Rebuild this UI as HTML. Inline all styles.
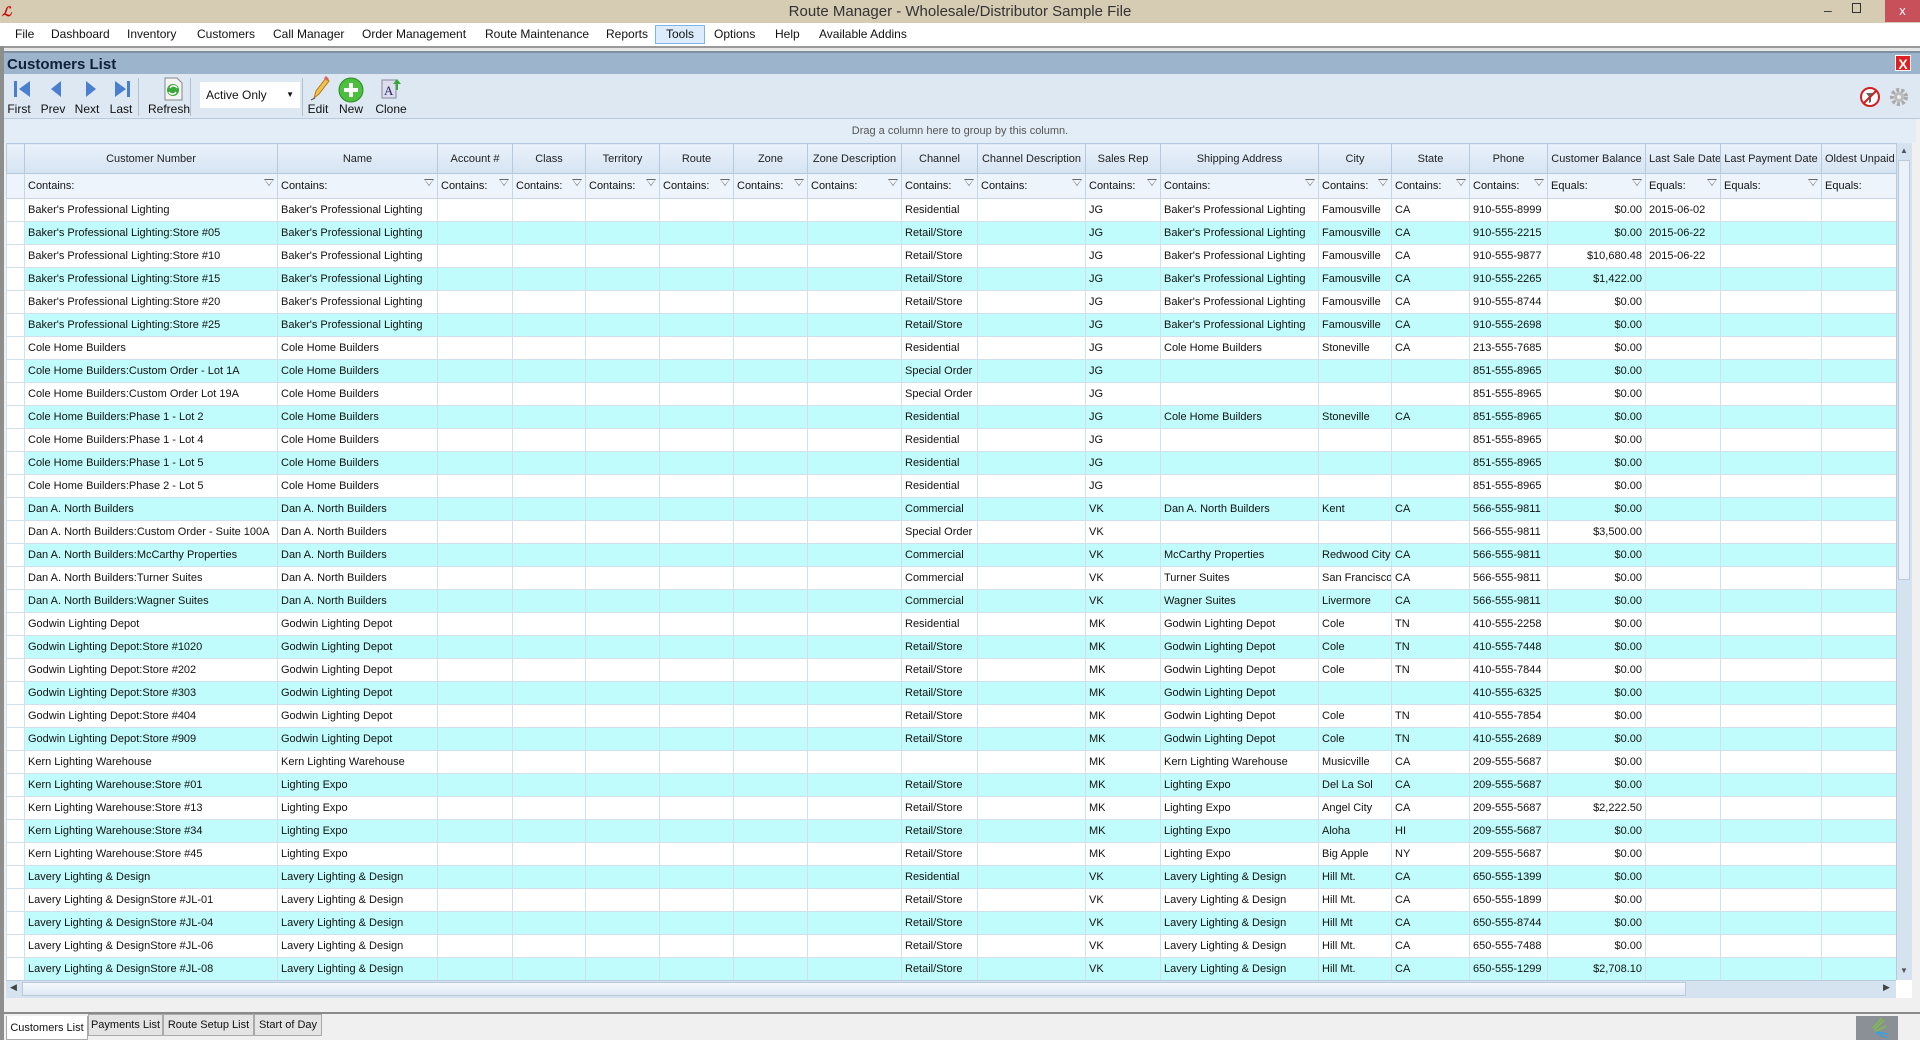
<!DOCTYPE html>
<html><head><meta charset="utf-8"><style>
*{box-sizing:border-box;margin:0;padding:0}
body{width:1920px;height:1040px;overflow:hidden;background:#f0f0f0;font-family:"Liberation Sans",sans-serif;position:relative;color:#111}
.abs{position:absolute}
#title{left:0;top:0;width:1920px;height:23px;background:#d6cbb3;text-align:center;font-size:15px;line-height:23px;color:#333}
#menu{left:0;top:23px;width:1920px;height:23px;background:#fff;font-size:12px;}
#menu span{position:absolute;top:4px}
#cl{left:4px;top:51px;width:1916px;height:23px;background:#9db5cc;font-weight:bold;font-size:15px;line-height:23px;padding-left:3px;color:#10203a;border-top:2px solid #7d8fa0}
#tb{left:4px;top:74px;width:1916px;height:45px;background:#dde8f3;border-bottom:1px solid #b9cadb}
.tl{position:absolute;top:33px;font-size:12px;transform:translateX(-50%);top:28px}
#grp{left:4px;top:119px;width:1912px;height:24px;background:#e3edf7;font-size:11px;color:#555;text-align:center;line-height:24px}
#grid{left:6px;top:143px;width:1890px}
table{border-collapse:collapse;table-layout:fixed;width:1890px;font-size:11px}
td,th{white-space:nowrap;overflow:hidden;padding:0 3px;border:1px solid #d3e0ec;font-weight:normal}
tr.h th{height:30px;background:linear-gradient(#eaf2fb,#d5e3f2);border-color:#b5c9de;text-align:center;color:#222}
tr.f td{height:25px;background:#eef4fb;border-color:#c5d6e7;position:relative}
tr.f td i{position:absolute;right:4px;top:5px;width:9px;height:10px;border:1px solid #555;border-width:0;}
tr.f td i:before{content:"";position:absolute;left:0;top:0;border-left:5px solid transparent;border-right:5px solid transparent;border-top:7px solid #666}
tr.f td i:after{content:"";position:absolute;left:1px;top:1px;border-left:4px solid transparent;border-right:4px solid transparent;border-top:5px solid #eef4fb}
tbody tr td{height:23px}
tbody tr:nth-child(even) td{background:#c0fcfc}
tbody tr:nth-child(odd) td{background:#fff}
td.r{text-align:right}
td.s{background:#fff!important}
</style></head><body>
<div id="title" class="abs">Route Manager - Wholesale/Distributor Sample File</div>
<div class="abs" style="left:2px;top:4px;color:#c00;font-weight:bold;font-style:italic;font-size:13px">ℒ</div>
<div class="abs" style="left:1824px;top:2px;font-size:14px;color:#333">‒</div>
<div class="abs" style="left:1852px;top:3px;width:9px;height:10px;border:1px solid #333"></div>
<div class="abs" style="left:1885px;top:0;width:35px;height:22px;background:#c7505a;color:#fff;text-align:center;font-size:13px;line-height:21px">x</div>
<div id="menu" class="abs">
<span style="left:15px">File</span><span style="left:51px">Dashboard</span><span style="left:127px">Inventory</span><span style="left:197px">Customers</span><span style="left:273px">Call Manager</span><span style="left:362px">Order Management</span><span style="left:485px">Route Maintenance</span><span style="left:606px">Reports</span>
<div class="abs" style="left:655px;top:2px;width:50px;height:19px;background:#dcecfc;border:1px solid #7eb4ea"></div><span style="left:666px">Tools</span>
<span style="left:714px">Options</span><span style="left:775px">Help</span><span style="left:819px">Available Addins</span>
</div>
<div class="abs" style="left:0;top:46px;width:1920px;height:5px;background:#e6e6e6;border-top:2px solid #9a9a9a"></div>
<div class="abs" style="left:0;top:46px;width:4px;height:994px;background:#8e8e8e"></div>
<div id="cl" class="abs">Customers List</div>
<div class="abs" style="left:1895px;top:55px;width:16px;height:16px;background:#e02020;color:#fff;font-weight:bold;font-size:14px;text-align:center;line-height:16px;border:1px solid #fff">X</div>
<div id="tb" class="abs">
<svg class="abs" style="left:6px;top:6px" width="130" height="18">
<rect x="4" y="1" width="3" height="16" fill="#4a7fd0"/><polygon points="20,1 9,9 20,17" fill="#4a7fd0"/>
<polygon points="51,1 41,9 51,17" fill="#4a7fd0"/>
<polygon points="76,1 86,9 76,17" fill="#4a7fd0"/>
<polygon points="105,1 116,9 105,17" fill="#4a7fd0"/><rect x="117" y="1" width="3" height="16" fill="#4a7fd0"/>
</svg>
<div class="abs" style="left:134px;top:4px;width:1px;height:38px;background:#b0c0d0"></div>
<svg class="abs" style="left:158px;top:3px" width="22" height="24"><path d="M3 1h12l5 5v17H3z" fill="#f4f4f4" stroke="#888"/><circle cx="11" cy="13" r="6" fill="#3aa838"/><path d="M8 11a4 4 0 0 1 7 0M14 15a4 4 0 0 1 -7 0" stroke="#fff" stroke-width="1.5" fill="none"/></svg>
<div class="abs" style="left:186px;top:4px;width:1px;height:38px;background:#b0c0d0"></div>
<div class="abs" style="left:196px;top:8px;width:100px;height:26px;background:#fff;font-size:12px;line-height:26px;padding-left:6px">Active Only<span style="position:absolute;right:6px;font-size:8px">▼</span></div>
<div class="abs" style="left:298px;top:4px;width:1px;height:38px;background:#b0c0d0"></div>
<svg class="abs" style="left:304px;top:2px" width="22" height="26"><path d="M6 22l2-7 10-13 3 3-10 13z" fill="#f3c24a" stroke="#b07a20"/><path d="M16 2l3 3 2-2-3-3z" fill="#e06060"/><path d="M3 24l4 -2" stroke="#555"/></svg>
<svg class="abs" style="left:334px;top:3px" width="26" height="26"><circle cx="13" cy="13" r="12" fill="#4cbf3e" stroke="#2c8a24"/><path d="M13 6v14M6 13h14" stroke="#fff" stroke-width="4"/></svg>
<svg class="abs" style="left:376px;top:3px" width="24" height="24"><rect x="2" y="3" width="14" height="18" fill="#dde" stroke="#889"/><text x="4" y="18" font-size="13" font-family="Liberation Serif" fill="#226">A</text><path d="M17 2l4 5h-3v6h-2V7h-3z" fill="#3a3"/></svg>
<span class="tl" style="left:15px">First</span><span class="tl" style="left:49px">Prev</span><span class="tl" style="left:83px">Next</span><span class="tl" style="left:117px">Last</span><span class="tl" style="left:165px">Refresh</span><span class="tl" style="left:314px">Edit</span><span class="tl" style="left:347px">New</span><span class="tl" style="left:387px">Clone</span>
<svg class="abs" style="left:1855px;top:12px" width="22" height="22"><circle cx="11" cy="11" r="9" fill="#fff" stroke="#d02020" stroke-width="2"/><path d="M7 7h8l-3 4v5l-2 1v-6z" fill="#666"/><path d="M5 17L17 5" stroke="#d02020" stroke-width="2"/></svg>
<svg class="abs" style="left:1884px;top:12px" width="22" height="22"><circle cx="11" cy="11" r="7" fill="none" stroke="#aaa" stroke-width="4" stroke-dasharray="3 2"/><circle cx="11" cy="11" r="5" fill="#bbb"/><circle cx="11" cy="11" r="2" fill="#eee"/></svg>
</div>
<div id="grp" class="abs">Drag a column here to group by this column.</div>
<div id="grid" class="abs">
<table>
<colgroup><col style="width:18px"><col style="width:253px"><col style="width:160px"><col style="width:75px"><col style="width:73px"><col style="width:74px"><col style="width:74px"><col style="width:74px"><col style="width:94px"><col style="width:76px"><col style="width:108px"><col style="width:75px"><col style="width:158px"><col style="width:73px"><col style="width:78px"><col style="width:78px"><col style="width:98px"><col style="width:75px"><col style="width:101px"><col style="width:75px"></colgroup>
<thead>
<tr class="h"><th></th><th>Customer Number</th><th>Name</th><th>Account #</th><th>Class</th><th>Territory</th><th>Route</th><th>Zone</th><th>Zone Description</th><th>Channel</th><th>Channel Description</th><th>Sales Rep</th><th>Shipping Address</th><th>City</th><th>State</th><th>Phone</th><th>Customer Balance</th><th>Last Sale Date</th><th>Last Payment Date</th><th style="text-align:left">Oldest Unpaid</th></tr>
<tr class="f"><td></td><td>Contains:<i></i></td><td>Contains:<i></i></td><td>Contains:<i></i></td><td>Contains:<i></i></td><td>Contains:<i></i></td><td>Contains:<i></i></td><td>Contains:<i></i></td><td>Contains:<i></i></td><td>Contains:<i></i></td><td>Contains:<i></i></td><td>Contains:<i></i></td><td>Contains:<i></i></td><td>Contains:<i></i></td><td>Contains:<i></i></td><td>Contains:<i></i></td><td>Equals:<i></i></td><td>Equals:<i></i></td><td>Equals:<i></i></td><td>Equals:</td></tr>
</thead>
<tbody>
<tr><td class="s"></td><td>Baker's Professional Lighting</td><td>Baker's Professional Lighting</td><td></td><td></td><td></td><td></td><td></td><td></td><td>Residential</td><td></td><td>JG</td><td>Baker's Professional Lighting</td><td>Famousville</td><td>CA</td><td>910-555-8999</td><td class="r">$0.00</td><td>2015-06-02</td><td></td><td></td></tr>
<tr><td class="s"></td><td>Baker's Professional Lighting:Store #05</td><td>Baker's Professional Lighting</td><td></td><td></td><td></td><td></td><td></td><td></td><td>Retail/Store</td><td></td><td>JG</td><td>Baker's Professional Lighting</td><td>Famousville</td><td>CA</td><td>910-555-2215</td><td class="r">$0.00</td><td>2015-06-22</td><td></td><td></td></tr>
<tr><td class="s"></td><td>Baker's Professional Lighting:Store #10</td><td>Baker's Professional Lighting</td><td></td><td></td><td></td><td></td><td></td><td></td><td>Retail/Store</td><td></td><td>JG</td><td>Baker's Professional Lighting</td><td>Famousville</td><td>CA</td><td>910-555-9877</td><td class="r">$10,680.48</td><td>2015-06-22</td><td></td><td></td></tr>
<tr><td class="s"></td><td>Baker's Professional Lighting:Store #15</td><td>Baker's Professional Lighting</td><td></td><td></td><td></td><td></td><td></td><td></td><td>Retail/Store</td><td></td><td>JG</td><td>Baker's Professional Lighting</td><td>Famousville</td><td>CA</td><td>910-555-2265</td><td class="r">$1,422.00</td><td></td><td></td><td></td></tr>
<tr><td class="s"></td><td>Baker's Professional Lighting:Store #20</td><td>Baker's Professional Lighting</td><td></td><td></td><td></td><td></td><td></td><td></td><td>Retail/Store</td><td></td><td>JG</td><td>Baker's Professional Lighting</td><td>Famousville</td><td>CA</td><td>910-555-8744</td><td class="r">$0.00</td><td></td><td></td><td></td></tr>
<tr><td class="s"></td><td>Baker's Professional Lighting:Store #25</td><td>Baker's Professional Lighting</td><td></td><td></td><td></td><td></td><td></td><td></td><td>Retail/Store</td><td></td><td>JG</td><td>Baker's Professional Lighting</td><td>Famousville</td><td>CA</td><td>910-555-2698</td><td class="r">$0.00</td><td></td><td></td><td></td></tr>
<tr><td class="s"></td><td>Cole Home Builders</td><td>Cole Home Builders</td><td></td><td></td><td></td><td></td><td></td><td></td><td>Residential</td><td></td><td>JG</td><td>Cole Home Builders</td><td>Stoneville</td><td>CA</td><td>213-555-7685</td><td class="r">$0.00</td><td></td><td></td><td></td></tr>
<tr><td class="s"></td><td>Cole Home Builders:Custom Order - Lot 1A</td><td>Cole Home Builders</td><td></td><td></td><td></td><td></td><td></td><td></td><td>Special Order</td><td></td><td>JG</td><td></td><td></td><td></td><td>851-555-8965</td><td class="r">$0.00</td><td></td><td></td><td></td></tr>
<tr><td class="s"></td><td>Cole Home Builders:Custom Order Lot 19A</td><td>Cole Home Builders</td><td></td><td></td><td></td><td></td><td></td><td></td><td>Special Order</td><td></td><td>JG</td><td></td><td></td><td></td><td>851-555-8965</td><td class="r">$0.00</td><td></td><td></td><td></td></tr>
<tr><td class="s"></td><td>Cole Home Builders:Phase 1 - Lot 2</td><td>Cole Home Builders</td><td></td><td></td><td></td><td></td><td></td><td></td><td>Residential</td><td></td><td>JG</td><td>Cole Home Builders</td><td>Stoneville</td><td>CA</td><td>851-555-8965</td><td class="r">$0.00</td><td></td><td></td><td></td></tr>
<tr><td class="s"></td><td>Cole Home Builders:Phase 1 - Lot 4</td><td>Cole Home Builders</td><td></td><td></td><td></td><td></td><td></td><td></td><td>Residential</td><td></td><td>JG</td><td></td><td></td><td></td><td>851-555-8965</td><td class="r">$0.00</td><td></td><td></td><td></td></tr>
<tr><td class="s"></td><td>Cole Home Builders:Phase 1 - Lot 5</td><td>Cole Home Builders</td><td></td><td></td><td></td><td></td><td></td><td></td><td>Residential</td><td></td><td>JG</td><td></td><td></td><td></td><td>851-555-8965</td><td class="r">$0.00</td><td></td><td></td><td></td></tr>
<tr><td class="s"></td><td>Cole Home Builders:Phase 2 - Lot 5</td><td>Cole Home Builders</td><td></td><td></td><td></td><td></td><td></td><td></td><td>Residential</td><td></td><td>JG</td><td></td><td></td><td></td><td>851-555-8965</td><td class="r">$0.00</td><td></td><td></td><td></td></tr>
<tr><td class="s"></td><td>Dan A. North Builders</td><td>Dan A. North Builders</td><td></td><td></td><td></td><td></td><td></td><td></td><td>Commercial</td><td></td><td>VK</td><td>Dan A. North Builders</td><td>Kent</td><td>CA</td><td>566-555-9811</td><td class="r">$0.00</td><td></td><td></td><td></td></tr>
<tr><td class="s"></td><td>Dan A. North Builders:Custom Order - Suite 100A</td><td>Dan A. North Builders</td><td></td><td></td><td></td><td></td><td></td><td></td><td>Special Order</td><td></td><td>VK</td><td></td><td></td><td></td><td>566-555-9811</td><td class="r">$3,500.00</td><td></td><td></td><td></td></tr>
<tr><td class="s"></td><td>Dan A. North Builders:McCarthy Properties</td><td>Dan A. North Builders</td><td></td><td></td><td></td><td></td><td></td><td></td><td>Commercial</td><td></td><td>VK</td><td>McCarthy Properties</td><td>Redwood City</td><td>CA</td><td>566-555-9811</td><td class="r">$0.00</td><td></td><td></td><td></td></tr>
<tr><td class="s"></td><td>Dan A. North Builders:Turner Suites</td><td>Dan A. North Builders</td><td></td><td></td><td></td><td></td><td></td><td></td><td>Commercial</td><td></td><td>VK</td><td>Turner Suites</td><td>San Francisco</td><td>CA</td><td>566-555-9811</td><td class="r">$0.00</td><td></td><td></td><td></td></tr>
<tr><td class="s"></td><td>Dan A. North Builders:Wagner Suites</td><td>Dan A. North Builders</td><td></td><td></td><td></td><td></td><td></td><td></td><td>Commercial</td><td></td><td>VK</td><td>Wagner Suites</td><td>Livermore</td><td>CA</td><td>566-555-9811</td><td class="r">$0.00</td><td></td><td></td><td></td></tr>
<tr><td class="s"></td><td>Godwin Lighting Depot</td><td>Godwin Lighting Depot</td><td></td><td></td><td></td><td></td><td></td><td></td><td>Residential</td><td></td><td>MK</td><td>Godwin Lighting Depot</td><td>Cole</td><td>TN</td><td>410-555-2258</td><td class="r">$0.00</td><td></td><td></td><td></td></tr>
<tr><td class="s"></td><td>Godwin Lighting Depot:Store #1020</td><td>Godwin Lighting Depot</td><td></td><td></td><td></td><td></td><td></td><td></td><td>Retail/Store</td><td></td><td>MK</td><td>Godwin Lighting Depot</td><td>Cole</td><td>TN</td><td>410-555-7448</td><td class="r">$0.00</td><td></td><td></td><td></td></tr>
<tr><td class="s"></td><td>Godwin Lighting Depot:Store #202</td><td>Godwin Lighting Depot</td><td></td><td></td><td></td><td></td><td></td><td></td><td>Retail/Store</td><td></td><td>MK</td><td>Godwin Lighting Depot</td><td>Cole</td><td>TN</td><td>410-555-7844</td><td class="r">$0.00</td><td></td><td></td><td></td></tr>
<tr><td class="s"></td><td>Godwin Lighting Depot:Store #303</td><td>Godwin Lighting Depot</td><td></td><td></td><td></td><td></td><td></td><td></td><td>Retail/Store</td><td></td><td>MK</td><td>Godwin Lighting Depot</td><td></td><td></td><td>410-555-6325</td><td class="r">$0.00</td><td></td><td></td><td></td></tr>
<tr><td class="s"></td><td>Godwin Lighting Depot:Store #404</td><td>Godwin Lighting Depot</td><td></td><td></td><td></td><td></td><td></td><td></td><td>Retail/Store</td><td></td><td>MK</td><td>Godwin Lighting Depot</td><td>Cole</td><td>TN</td><td>410-555-7854</td><td class="r">$0.00</td><td></td><td></td><td></td></tr>
<tr><td class="s"></td><td>Godwin Lighting Depot:Store #909</td><td>Godwin Lighting Depot</td><td></td><td></td><td></td><td></td><td></td><td></td><td>Retail/Store</td><td></td><td>MK</td><td>Godwin Lighting Depot</td><td>Cole</td><td>TN</td><td>410-555-2689</td><td class="r">$0.00</td><td></td><td></td><td></td></tr>
<tr><td class="s"></td><td>Kern Lighting Warehouse</td><td>Kern Lighting Warehouse</td><td></td><td></td><td></td><td></td><td></td><td></td><td></td><td></td><td>MK</td><td>Kern Lighting Warehouse</td><td>Musicville</td><td>CA</td><td>209-555-5687</td><td class="r">$0.00</td><td></td><td></td><td></td></tr>
<tr><td class="s"></td><td>Kern Lighting Warehouse:Store #01</td><td>Lighting Expo</td><td></td><td></td><td></td><td></td><td></td><td></td><td>Retail/Store</td><td></td><td>MK</td><td>Lighting Expo</td><td>Del La Sol</td><td>CA</td><td>209-555-5687</td><td class="r">$0.00</td><td></td><td></td><td></td></tr>
<tr><td class="s"></td><td>Kern Lighting Warehouse:Store #13</td><td>Lighting Expo</td><td></td><td></td><td></td><td></td><td></td><td></td><td>Retail/Store</td><td></td><td>MK</td><td>Lighting Expo</td><td>Angel City</td><td>CA</td><td>209-555-5687</td><td class="r">$2,222.50</td><td></td><td></td><td></td></tr>
<tr><td class="s"></td><td>Kern Lighting Warehouse:Store #34</td><td>Lighting Expo</td><td></td><td></td><td></td><td></td><td></td><td></td><td>Retail/Store</td><td></td><td>MK</td><td>Lighting Expo</td><td>Aloha</td><td>HI</td><td>209-555-5687</td><td class="r">$0.00</td><td></td><td></td><td></td></tr>
<tr><td class="s"></td><td>Kern Lighting Warehouse:Store #45</td><td>Lighting Expo</td><td></td><td></td><td></td><td></td><td></td><td></td><td>Retail/Store</td><td></td><td>MK</td><td>Lighting Expo</td><td>Big Apple</td><td>NY</td><td>209-555-5687</td><td class="r">$0.00</td><td></td><td></td><td></td></tr>
<tr><td class="s"></td><td>Lavery Lighting &amp; Design</td><td>Lavery Lighting &amp; Design</td><td></td><td></td><td></td><td></td><td></td><td></td><td>Residential</td><td></td><td>VK</td><td>Lavery Lighting &amp; Design</td><td>Hill Mt.</td><td>CA</td><td>650-555-1399</td><td class="r">$0.00</td><td></td><td></td><td></td></tr>
<tr><td class="s"></td><td>Lavery Lighting &amp; DesignStore #JL-01</td><td>Lavery Lighting &amp; Design</td><td></td><td></td><td></td><td></td><td></td><td></td><td>Retail/Store</td><td></td><td>VK</td><td>Lavery Lighting &amp; Design</td><td>Hill Mt.</td><td>CA</td><td>650-555-1899</td><td class="r">$0.00</td><td></td><td></td><td></td></tr>
<tr><td class="s"></td><td>Lavery Lighting &amp; DesignStore #JL-04</td><td>Lavery Lighting &amp; Design</td><td></td><td></td><td></td><td></td><td></td><td></td><td>Retail/Store</td><td></td><td>VK</td><td>Lavery Lighting &amp; Design</td><td>Hill Mt</td><td>CA</td><td>650-555-8744</td><td class="r">$0.00</td><td></td><td></td><td></td></tr>
<tr><td class="s"></td><td>Lavery Lighting &amp; DesignStore #JL-06</td><td>Lavery Lighting &amp; Design</td><td></td><td></td><td></td><td></td><td></td><td></td><td>Retail/Store</td><td></td><td>VK</td><td>Lavery Lighting &amp; Design</td><td>Hill Mt.</td><td>CA</td><td>650-555-7488</td><td class="r">$0.00</td><td></td><td></td><td></td></tr>
<tr><td class="s"></td><td>Lavery Lighting &amp; DesignStore #JL-08</td><td>Lavery Lighting &amp; Design</td><td></td><td></td><td></td><td></td><td></td><td></td><td>Retail/Store</td><td></td><td>VK</td><td>Lavery Lighting &amp; Design</td><td>Hill Mt.</td><td>CA</td><td>650-555-1299</td><td class="r">$2,708.10</td><td></td><td></td><td></td></tr>
</tbody></table></div>
<!-- vertical scrollbar -->
<div class="abs" style="left:1896px;top:143px;width:16px;height:838px;background:#d5e2f0;border-left:1px solid #b9cadb"></div>
<div class="abs" style="left:1898px;top:160px;width:12px;height:420px;background:#eaf1f9;border:1px solid #b9cadb"></div>
<div class="abs" style="left:1900px;top:146px;font-size:8px;color:#555">▲</div>
<div class="abs" style="left:1900px;top:966px;font-size:8px;color:#555">▼</div>
<!-- horizontal scrollbar -->
<div class="abs" style="left:6px;top:980px;width:1890px;height:18px;background:#d5e2f0;border-top:1px solid #b9cadb"></div>
<div class="abs" style="left:22px;top:982px;width:1664px;height:14px;background:linear-gradient(#f4f8fc,#dfe9f4);border:1px solid #b9cadb"></div>
<div class="abs" style="left:10px;top:982px;font-size:9px;color:#444">◀</div>
<div class="abs" style="left:1883px;top:982px;font-size:9px;color:#444">▶</div>
<div class="abs" style="left:1896px;top:980px;width:16px;height:18px;background:#fff"></div>
<!-- bottom -->
<div class="abs" style="left:4px;top:1012px;width:1916px;height:2px;background:#8a8a8a"></div>
<div class="abs" style="left:4px;top:1014px;width:1916px;height:26px;background:#f0f0f0"></div>
<div class="abs" style="left:6px;top:1016px;width:82px;height:24px;background:#fff;border:1px solid #aaa;border-top:none;font-size:11px;line-height:24px;text-align:center">Customers List</div>
<div class="abs" style="left:88px;top:1014px;width:75px;height:22px;background:#e4e4e4;border:1px solid #aaa;font-size:11px;line-height:20px;text-align:center">Payments List</div>
<div class="abs" style="left:163px;top:1014px;width:91px;height:22px;background:#e4e4e4;border:1px solid #aaa;font-size:11px;line-height:20px;text-align:center">Route Setup List</div>
<div class="abs" style="left:254px;top:1014px;width:68px;height:22px;background:#e4e4e4;border:1px solid #aaa;font-size:11px;line-height:20px;text-align:center">Start of Day</div>
<div class="abs" style="left:1856px;top:1016px;width:42px;height:24px;background:#8b9097"></div>
<svg class="abs" style="left:1864px;top:1018px" width="26" height="22"><path d="M20 2L10 12M22 8L11 14M18 0L9 10" stroke="#7bc142" stroke-width="1.5"/><path d="M24 16L12 14M23 20L12 15" stroke="#3aa0e0" stroke-width="1.5"/></svg>
</body></html>
